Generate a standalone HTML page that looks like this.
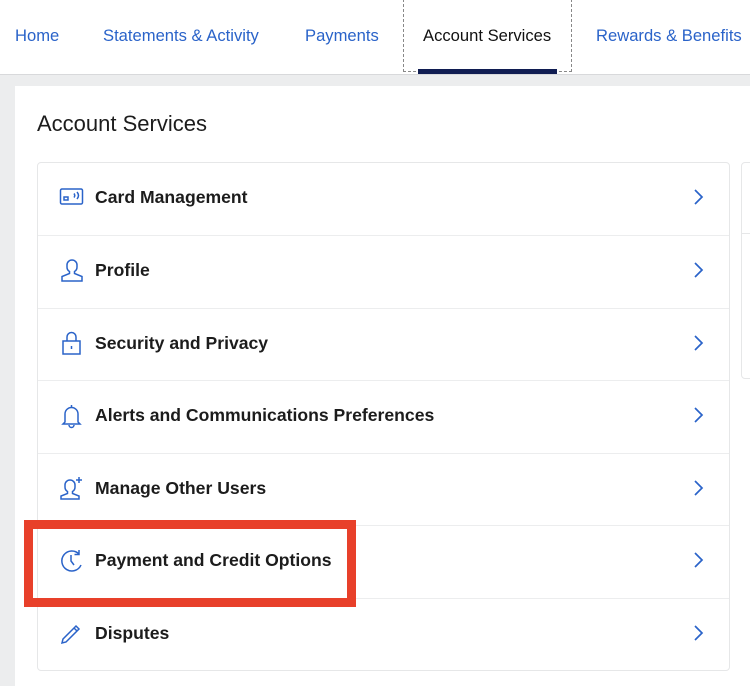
<!DOCTYPE html>
<html><head><meta charset="utf-8"><style>
*{margin:0;padding:0;box-sizing:border-box}
body{width:750px;height:675px;overflow:hidden;background:#ecedee;font-family:"Liberation Sans",Arial,sans-serif;position:relative}
.nav{position:absolute;left:0;top:0;width:750px;height:75px;background:#fff;border-bottom:1px solid #d8d9db}
.nav span{position:absolute;top:26px;font-size:16.6px;color:#2a63c9;white-space:nowrap}
.dash{position:absolute;left:403px;top:-1px;width:169px;height:73px;border:1px dashed #888}
.ul{position:absolute;left:418px;top:69px;width:139px;height:5px;background:#101d52}
.panel{position:absolute;left:15px;top:86px;width:740px;height:600px;background:#fff}
h1{position:absolute;left:37px;top:111px;font-size:22px;font-weight:normal;color:#1c1c1c}
.list{position:absolute;left:37px;top:162px;width:693px;height:509px;border:1px solid #e6e7e8;border-radius:4px;background:#fff}
.rc{position:absolute;left:741px;top:162px;width:20px;height:217px;border:1px solid #e6e7e8;border-radius:4px}
.rc i{position:absolute;left:0;top:70px;width:20px;border-top:1px solid #e6e7e8}
.row{position:absolute;left:0;width:691px;height:73px;border-top:1px solid #ecedee}
.row b{position:absolute;left:57px;top:24px;font-size:17.6px;color:#1c1c1c}
.row svg.ic{position:absolute;left:21px;top:22px}
.row svg.ch{position:absolute;left:655px;top:25px}
.red{position:absolute;left:24px;top:520px;width:332px;height:87px;border:9px solid #e8402a}
</style></head><body>
<div class="nav">
<span style="left:15px">Home</span>
<span style="left:103px">Statements &amp; Activity</span>
<span style="left:305px">Payments</span>
<span style="left:423px;color:#111">Account Services</span>
<span style="left:596px">Rewards &amp; Benefits</span>
<div class="dash"></div><div class="ul"></div>
</div>
<div class="panel"></div>
<h1>Account Services</h1>
<div class="rc"><i></i></div>
<div class="list">
<div class="row" style="top:0;border-top:none">
<svg class="ic" width="26" height="26" viewBox="0 0 26 26" fill="none" stroke="#2a63c9" stroke-width="1.5"><rect x="1.5" y="4" width="22" height="15" rx="1.5"/><rect x="5" y="12" width="4" height="3"/><path d="M15 8.5q1.5 2 0 4M18 7q3 3.5 0 7"/></svg>
<b>Card Management</b>
<svg class="ch" width="12" height="18" viewBox="0 0 12 18"><path d="M2 2l7 7-7 7" fill="none" stroke="#2a63c9" stroke-width="1.7"/></svg></div>
<div class="row" style="top:72px">
<svg class="ic" width="26" height="26" viewBox="0 0 26 26" fill="none" stroke="#2a63c9" stroke-width="1.5"><path d="M13 2a5 5 0 0 0-5 5v2a5 5 0 0 0 2.5 4.5v2L3 18.5V23h20v-4.5l-7.5-3v-2A5 5 0 0 0 18 9V7a5 5 0 0 0-5-5z"/></svg>
<b>Profile</b>
<svg class="ch" width="12" height="18" viewBox="0 0 12 18"><path d="M2 2l7 7-7 7" fill="none" stroke="#2a63c9" stroke-width="1.7"/></svg></div>
<div class="row" style="top:145px">
<svg class="ic" width="26" height="26" viewBox="0 0 26 26" fill="none" stroke="#2a63c9" stroke-width="1.5"><rect x="4" y="10" width="17" height="13"/><path d="M8 10V6a4.5 4.5 0 0 1 9 0v4M12.5 15v3"/></svg>
<b>Security and Privacy</b>
<svg class="ch" width="12" height="18" viewBox="0 0 12 18"><path d="M2 2l7 7-7 7" fill="none" stroke="#2a63c9" stroke-width="1.7"/></svg></div>
<div class="row" style="top:217px">
<svg class="ic" width="26" height="26" viewBox="0 0 26 26" fill="none" stroke="#2a63c9" stroke-width="1.5"><path d="M12.5 2v2M6 19V11a6.5 6.5 0 0 1 13 0v8l2 2H4zM10 22a2.5 2.5 0 0 0 5 0"/></svg>
<b>Alerts and Communications Preferences</b>
<svg class="ch" width="12" height="18" viewBox="0 0 12 18"><path d="M2 2l7 7-7 7" fill="none" stroke="#2a63c9" stroke-width="1.7"/></svg></div>
<div class="row" style="top:290px">
<svg class="ic" width="26" height="26" viewBox="0 0 26 26" fill="none" stroke="#2a63c9" stroke-width="1.5"><path d="M11 4a5 5 0 0 0-5 5v2a5 5 0 0 0 2.5 4.5v2L2 20V23h18v-3l-6.5-2.5v-2A5 5 0 0 0 16 11V9a5 5 0 0 0-5-5zM20 1v6M17 4h6"/></svg>
<b>Manage Other Users</b>
<svg class="ch" width="12" height="18" viewBox="0 0 12 18"><path d="M2 2l7 7-7 7" fill="none" stroke="#2a63c9" stroke-width="1.7"/></svg></div>
<div class="row" style="top:362px">
<svg class="ic" width="26" height="26" viewBox="0 0 26 26" fill="none" stroke="#2a63c9" stroke-width="1.5"><path d="M20 6A10 10 0 1 0 22 17M20 2v4.5h-4.5M12 7v6l3 4"/></svg>
<b>Payment and Credit Options</b>
<svg class="ch" width="12" height="18" viewBox="0 0 12 18"><path d="M2 2l7 7-7 7" fill="none" stroke="#2a63c9" stroke-width="1.7"/></svg></div>
<div class="row" style="top:435px">
<svg class="ic" width="26" height="26" viewBox="0 0 26 26" fill="none" stroke="#2a63c9" stroke-width="1.5"><path d="M4 18L17 5l3 3L7 21l-4 1zM15 7l3 3"/></svg>
<b>Disputes</b>
<svg class="ch" width="12" height="18" viewBox="0 0 12 18"><path d="M2 2l7 7-7 7" fill="none" stroke="#2a63c9" stroke-width="1.7"/></svg></div>
</div>
<div class="red"></div>
</body></html>
